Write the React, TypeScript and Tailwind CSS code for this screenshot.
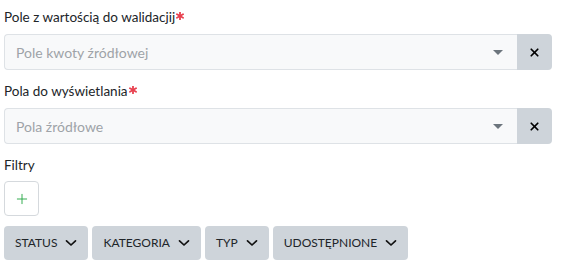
import { X, Plus } from "lucide-react";

type SelectFieldProps = {
  label: string;
  placeholder: string;
};

const Gwiazdka = () => (
  <svg width="8" height="8" viewBox="0 0 8 8" className="inline-block ml-[1px] mb-[6px]">
    <g stroke="#e8414f" strokeWidth="1.8" strokeLinecap="round">
      <line x1="4" y1="0.6" x2="4" y2="7.4" />
      <line x1="1" y1="2.3" x2="7" y2="5.7" />
      <line x1="1" y1="5.7" x2="7" y2="2.3" />
    </g>
  </svg>
);

const SelectField = ({ label, placeholder }: SelectFieldProps) => {
  return (
    <div className="mb-[11px]">
      <label className="block text-[13.5px] leading-[20px] text-[#212529] mb-[7px]">
        {label}
        <Gwiazdka />
      </label>
      <div className="flex h-[36px] w-[548px]">
        <div className="flex flex-1 items-center justify-between bg-[#f8f9fa] border border-[#dee2e6] border-r-0 rounded-l-[4px] pl-[11px] pr-[14px]">
          <span className="text-[14px] text-[#9ea3a8]">{placeholder}</span>
          <span className="w-0 h-0 border-l-[5px] border-r-[5px] border-t-[5px] border-l-transparent border-r-transparent border-t-[#6c757d]" />
        </div>
        <button className="flex w-[35px] items-center justify-center bg-[#ced4da] rounded-r-[4px]">
          <X size={13} strokeWidth={3.2} className="text-black" />
        </button>
      </div>
    </div>
  );
};

const Strzalka = () => (
  <svg width="12" height="8" viewBox="0 0 12 8" fill="none">
    <path d="M1.5 1.8 L6 6 L10.5 1.8" stroke="#111" strokeWidth="1.7" strokeLinecap="round" strokeLinejoin="round" />
  </svg>
);

const filtry = ["STATUS", "KATEGORIA", "TYP", "UDOSTĘPNIONE"];

export default function App() {
  return (
    <main className="bg-white px-[4px] pt-[7px] font-['Lato',sans-serif]">
      <SelectField label="Pole z wartością do walidacjij" placeholder="Pole kwoty źródłowej" />
      <SelectField label="Pola do wyświetlania" placeholder="Pola źródłowe" />

      {/* Filtry */}
      <div className="text-[13.5px] leading-[20px] text-[#212529] mb-[6px]">Filtry</div>
      <button className="flex h-[35px] w-[35px] items-center justify-center border border-[#d5d9dd] rounded-[4px] bg-white mb-[10px]">
        <Plus size={16} strokeWidth={1.4} className="text-[#28a745]" />
      </button>
      <div className="flex gap-[4px]">
        {filtry.map((f) => (
          <button
            key={f}
            className="flex h-[34px] items-center gap-[8px] bg-[#ced4da] rounded-[4px] pl-[11px] pr-[11px] text-[12px] text-[#212529]"
          >
            {f}
            <Strzalka />
          </button>
        ))}
      </div>
    </main>
  );
}
